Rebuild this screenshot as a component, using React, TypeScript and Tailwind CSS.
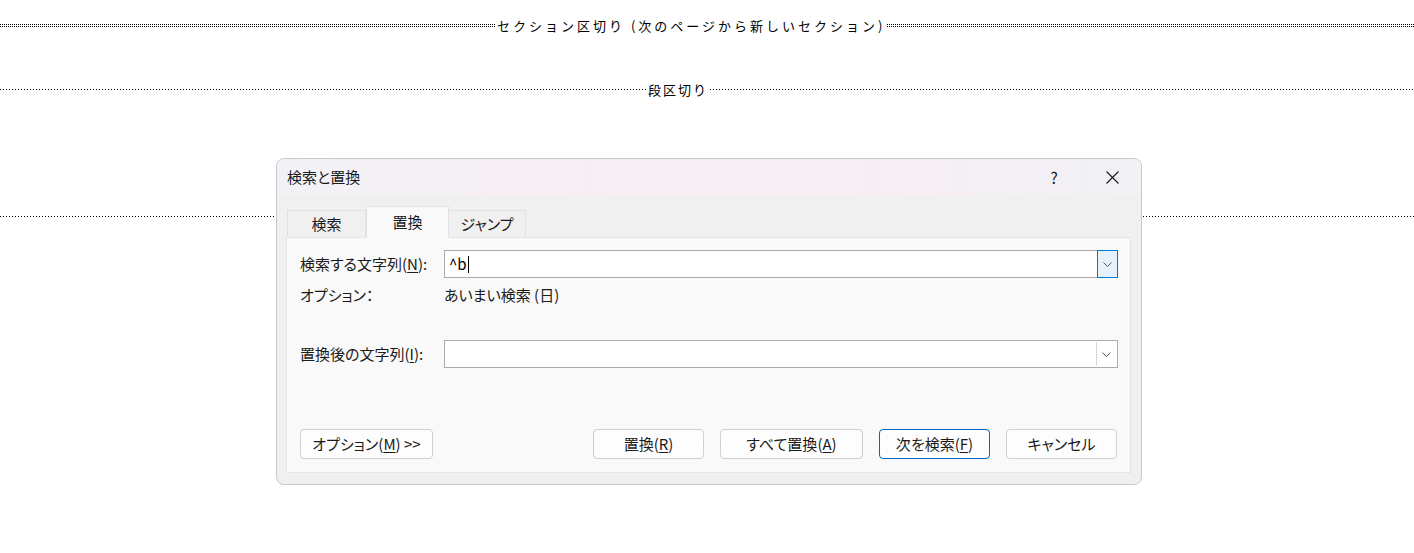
import React from "react";

const font = "font-['Noto_Sans_CJK_JP','Noto_Sans',sans-serif]";
const palt = "[font-feature-settings:'palt']";

const Chevron = () => (
  <svg width="9" height="5" viewBox="0 0 9 5" fill="none">
    <polyline points="0.5,0.5 4.5,4.5 8.5,0.5" stroke="#5a5a5a" strokeWidth="1" />
  </svg>
);

const Key = ({ k }: { k: string }) => (
  <>
    (<span className="underline underline-offset-2">{k}</span>)
  </>
);

const Button = ({
  children,
  width,
  primary = false,
}: {
  children: React.ReactNode;
  width: string;
  primary?: boolean;
}) => (
  <div
    className={`${width} h-[30px] rounded-[4px] border bg-[#fdfdfd] flex items-center justify-center text-[15px] text-[#1a1a1a] ${
      primary ? "border-[#0067c0]" : "border-[#d0d0d0]"
    }`}
  >
    {children}
  </div>
);

const ComboBox = ({ text, focused = false }: { text?: string; focused?: boolean }) => (
  <div className="flex-1 flex h-[28px] border border-[#ababab] bg-white">
    <div className="flex-1 flex items-center pl-[4px] text-[15px] text-black">
      {text}
      {focused && <span className="ml-px w-px h-[17px] bg-black" />}
    </div>
    {focused ? (
      <div className="w-[21px] -my-px -mr-px border border-[#0078d4] bg-[#e5f1fb] flex items-center justify-center">
        <Chevron />
      </div>
    ) : (
      <div className="w-[20px] my-px mr-px border-l border-[#d6d6d6] flex items-center justify-center">
        <Chevron />
      </div>
    )}
  </div>
);

export default function App() {
  return (
    <div className={`relative w-[1414px] h-[553px] bg-white overflow-hidden ${font}`}>
      {/* section break */}
      <div className="mt-[17px] h-[17px] flex items-center text-[13px] text-black">
        <div className="w-[495px] h-[3px] border-y border-dotted border-black" />
        <span className="px-[2px] tracking-[3px] leading-none">セクション区切り (次のページから新しいセクション)</span>
        <div className="flex-1 h-[3px] border-y border-dotted border-black" />
      </div>

      {/* column break */}
      <div className="mt-[47px] h-[17px] flex items-center text-[13px] text-black">
        <div className="w-[646px] h-px bg-[repeating-linear-gradient(to_right,#000_0_1px,transparent_1px_3px)]" />
        <span className="px-[2px] tracking-[2px] leading-none">段区切り</span>
        <div className="flex-1 h-px bg-[repeating-linear-gradient(to_right,#000_0_1px,transparent_1px_3px)]" />
      </div>

      {/* page break */}
      <div className="mt-[118px] h-px bg-[repeating-linear-gradient(to_right,#000_0_1px,transparent_1px_3px)]" />

      {/* dialog window */}
      <div className={`absolute left-[276px] top-[158px] w-[866px] h-[327px] rounded-[8px] border border-[#c8c8c8] bg-[#f0f0f0] overflow-hidden flex flex-col text-[#1a1a1a] ${palt}`}>
        <div className="h-[36px] shrink-0 flex items-center pl-[10px] bg-[linear-gradient(90deg,#f2f2f6,#f8eef5_40%,#f8eef5_65%,#f1f1f6)]">
          <span className="text-[15px]">検索と置換</span>
          <div className="ml-auto flex h-full">
            <div className="w-[58px] flex items-center justify-center text-[16px]">?</div>
            <div className="w-[58px] flex items-center justify-center">
              <svg width="13" height="13" viewBox="0 0 13 13">
                <path d="M0.5 0.5 L12.5 12.5 M12.5 0.5 L0.5 12.5" stroke="#1a1a1a" strokeWidth="1.1" />
              </svg>
            </div>
          </div>
        </div>

        <div className="flex-1 flex flex-col pl-[9px] pr-[10px] pt-[11px] pb-[11px]">
          {/* tabs */}
          <div className="h-[31px] flex items-end pl-px text-[15px]">
            <div className="w-[79px] h-[27px] border border-b-0 border-[#e1e1e1] bg-[#f0f0f0] flex items-center justify-center">
              検索
            </div>
            <div className="relative z-10 -mb-px w-[83px] h-[32px] border border-b-0 border-[#e3e3e3] bg-[#f9f9f9] flex items-center justify-center pb-px">
              置換
            </div>
            <div className="w-[77px] h-[27px] border border-b-0 border-l-0 border-[#e1e1e1] bg-[#f0f0f0] flex items-center justify-center">
              ジャンプ
            </div>
          </div>

          {/* panel */}
          <div className="flex-1 flex flex-col border border-[#e5e5e5] bg-[#f9f9f9] pl-[13px] pr-[12px] pt-[12px] pb-[13px] text-[15px]">
            <div className="flex items-center">
              <div className="w-[144px]">
                検索する文字列<Key k="N" />:
              </div>
              <ComboBox text="^b" focused />
            </div>
            <div className="mt-[7px] h-[20px] flex items-center">
              <div className="w-[144px]">オプション：</div>
              <div>あいまい検索 (日)</div>
            </div>
            <div className="mt-[35px] flex items-center">
              <div className="w-[144px]">
                置換後の文字列<Key k="I" />:
              </div>
              <ComboBox />
            </div>

            <div className="mt-auto flex items-center">
              <Button width="w-[133px]">
                オプション<Key k="M" />&nbsp;&gt;&gt;
              </Button>
              <div className="ml-auto flex gap-[16px] mr-px">
                <Button width="w-[111px]">
                  置換<Key k="R" />
                </Button>
                <Button width="w-[143px]">
                  すべて置換<Key k="A" />
                </Button>
                <Button width="w-[111px]" primary>
                  次を検索<Key k="F" />
                </Button>
                <Button width="w-[111px]">キャンセル</Button>
              </div>
            </div>
          </div>
        </div>
      </div>
    </div>
  );
}
